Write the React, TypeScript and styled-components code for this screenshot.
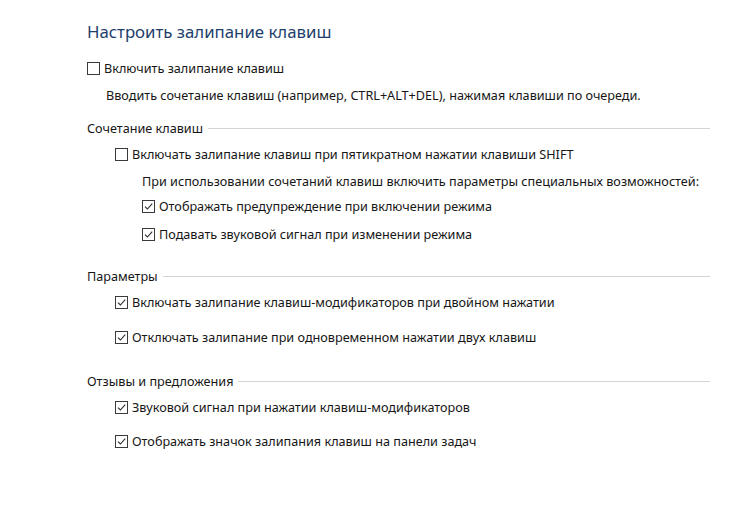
import React from "react";
import styled, { createGlobalStyle } from "styled-components";

const GlobalStyle = createGlobalStyle`
  html, body {
    margin: 0;
    padding: 0;
    background: #ffffff;
  }
  body {
    font-family: "Noto Sans", "Open Sans", sans-serif;
    color: #161616;
  }
`;

const Page = styled.div`
  width: 750px;
  height: 514px;
  box-sizing: border-box;
  padding: 20px 0 0 87px;
  display: flex;
  flex-direction: column;
  background: #ffffff;
`;

const Title = styled.h1`
  margin: 0;
  height: 24px;
  line-height: 24px;
  font-size: 16.8px;
  font-weight: 400;
  color: #1e3f6c;
`;

const Row = styled.div<{ $indent: number; $top: number }>`
  display: flex;
  align-items: center;
  height: 20px;
  margin-top: ${({ $top }) => $top}px;
  margin-left: ${({ $indent }) => $indent}px;
  font-size: 12.65px;
  line-height: 20px;
  white-space: nowrap;
`;

const Note = styled(Row)`
  color: #161616;
`;

const GroupHead = styled.div<{ $top: number }>`
  display: flex;
  align-items: center;
  gap: 5px;
  width: 623px;
  height: 20px;
  margin-top: ${({ $top }) => $top}px;
  font-size: 12.65px;
  white-space: nowrap;

  &::after {
    content: "";
    flex: 1;
    height: 1px;
    background: #d4d4d4;
  }
`;

const Box = styled.span`
  width: 13px;
  height: 13px;
  box-sizing: border-box;
  border: 1px solid #3a3a3a;
  margin-right: 4px;
  display: flex;
  align-items: center;
  justify-content: center;
  flex-shrink: 0;
`;

function Check({ checked, label }: { checked: boolean; label: string }) {
  return (
    <>
      <Box>
        {checked && (
          <svg width="11" height="11" viewBox="0 0 11 11">
            <path d="M2 5.6 L4.4 8 L9.2 2.6" fill="none" stroke="#2a2a2a" strokeWidth="1.1" />
          </svg>
        )}
      </Box>
      <span>{label}</span>
    </>
  );
}

export default function App() {
  return (
    <>
      <GlobalStyle />
      <Page>
        <Title>Настроить залипание клавиш</Title>
        <Row $indent={0} $top={14}>
          <Check checked={false} label="Включить залипание клавиш" />
        </Row>
        <Note $indent={19} $top={7}>
          Вводить сочетание клавиш (например, CTRL+ALT+DEL), нажимая клавиши по очереди.
        </Note>

        <GroupHead $top={13}>Сочетание клавиш</GroupHead>
        <Row $indent={28} $top={6}>
          <Check checked={false} label="Включать залипание клавиш при пятикратном нажатии клавиши SHIFT" />
        </Row>
        <Note $indent={55} $top={7}>
          При использовании сочетаний клавиш включить параметры специальных возможностей:
        </Note>
        <Row $indent={55} $top={5}>
          <Check checked label="Отображать предупреждение при включении режима" />
        </Row>
        <Row $indent={55} $top={8}>
          <Check checked label="Подавать звуковой сигнал при изменении режима" />
        </Row>

        <GroupHead $top={22}>Параметры</GroupHead>
        <Row $indent={28} $top={6}>
          <Check checked label="Включать залипание клавиш-модификаторов при двойном нажатии" />
        </Row>
        <Row $indent={28} $top={15}>
          <Check checked label="Отключать залипание при одновременном нажатии двух клавиш" />
        </Row>

        <GroupHead $top={24}>Отзывы и предложения</GroupHead>
        <Row $indent={28} $top={6}>
          <Check checked label="Звуковой сигнал при нажатии клавиш-модификаторов" />
        </Row>
        <Row $indent={28} $top={14}>
          <Check checked label="Отображать значок залипания клавиш на панели задач" />
        </Row>
      </Page>
    </>
  );
}
